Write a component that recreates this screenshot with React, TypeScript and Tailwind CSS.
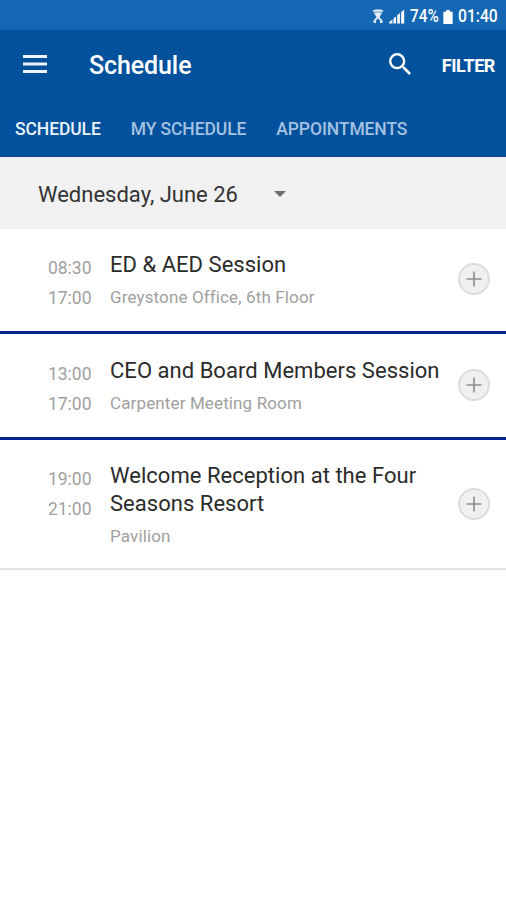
import clsx from "clsx";

type Session = {
  start: string;
  end: string;
  title: string;
  place: string;
  rowClass: string;
};

const tabs = [
  { label: "SCHEDULE", active: true },
  { label: "MY SCHEDULE", active: false },
  { label: "APPOINTMENTS", active: false },
];

const sessions: Session[] = [
  {
    start: "08:30",
    end: "17:00",
    title: "ED & AED Session",
    place: "Greystone Office, 6th Floor",
    rowClass: "h-[105px] pb-[2px] border-b-[3px] border-[#04218c]",
  },
  {
    start: "13:00",
    end: "17:00",
    title: "CEO and Board Members Session",
    place: "Carpenter Meeting Room",
    rowClass: "h-[106px] pt-px pb-[3px] border-b-[3px] border-[#04218c]",
  },
  {
    start: "19:00",
    end: "21:00",
    title: "Welcome Reception at the Four Seasons Resort",
    place: "Pavilion",
    rowClass: "h-[130px] border-b-2 border-[#e4e4e4]",
  },
];

const StatusBar = () => (
  <div className="h-[30px] bg-[#1467b3] flex items-center justify-end pr-[7px] pt-[3px] text-white">
    <svg width="12" height="15" viewBox="0 0 12 15" fill="currentColor">
      <path d="M0.5 1.500Q6-1 11.500 1.500L10 3.500Q6 2 2 3.500Z" opacity="0.8" />
      <path d="M2 4Q6 2.600 10 4L7.500 8H4.500Z" opacity="0.9" />
      <path d="M4.500 8h3l3 3.500V14H8v-2.500L6 9.500l-2 2V14H1.500v-2.500z" opacity="0.85" />
    </svg>
    <svg className="ml-[5px]" width="17" height="15" viewBox="0 0 17 15" fill="currentColor">
      <path d="M0 14.500v-1.500l3.500-2.500v4z" opacity="0.9" />
      <path d="M4.500 14.500V9.500l2.500-2v7zM8.200 14.500V6.300l2.700-2.200v10.400zM12.100 14.500V3.300L15.200 .5v14z" />
    </svg>
    <span className="ml-[4px] -mt-px text-[18px] leading-5 w-[30px]">
      <span className="inline-block origin-left scale-x-[0.85] font-medium whitespace-nowrap">74%</span>
    </span>
    <svg className="ml-[3px]" width="10" height="14" viewBox="0 0 10 15" fill="currentColor">
      <path d="M3 0h4v2h3v13H0V2h3z" />
    </svg>
    <span className="ml-[5px] -mt-px text-[18px] leading-5 w-[41px]">
      <span className="inline-block origin-left scale-x-[0.87] font-medium whitespace-nowrap">01:40</span>
    </span>
  </div>
);

const Header = () => (
  <header className="h-[127px] bg-[#02519c] text-white border-b border-[#1b3f92]">
    <div className="h-[70px] flex items-center pl-[23px] pr-[11px]">
      <svg className="-mt-[2px]" width="24" height="18" viewBox="0 0 24 18" fill="currentColor">
        <path d="M0 0h24v3H0zM0 7.500h24v3H0zM0 15h24v3H0z" opacity="0.93" />
      </svg>
      <h1 className="ml-[42px] mt-[2px] text-[25px] font-medium leading-[30px] tracking-[-0.1px]">Schedule</h1>
      <svg className="ml-auto -mt-[2px]" width="22" height="22" viewBox="3 3 17.500 17.500" fill="currentColor">
        <path d="M15.500 14h-.79l-.28-.27A6.471 6.471 0 0 0 16 9.500 6.500 6.500 0 1 0 9.500 16c1.610 0 3.090-.59 4.230-1.570l.27.28v.79l5 4.990L20.490 19l-4.990-5zm-6 0C7.010 14 5 11.990 5 9.500S7.010 5 9.500 5 14 7.010 14 9.500 11.990 14 9.500 14z" />
      </svg>
      <button className="ml-[31px] text-[18px] font-bold tracking-[-0.4px]">FILTER</button>
    </div>
    <nav className="flex gap-[30px] pl-[15px] pt-[15px] text-[17.5px] leading-7 font-medium tracking-[-0.1px] whitespace-nowrap">
      {tabs.map((tab) => (
        <span key={tab.label} className={clsx(tab.active ? "text-[#e9f1fb]" : "text-[#a4c2e2]")}>
          {tab.label}
        </span>
      ))}
    </nav>
  </header>
);

const SessionRow = ({ session }: { session: Session }) => (
  <li className={clsx("flex items-start pr-4", session.rowClass)}>
    <div className="w-[91.5px] pt-[24px] text-right text-[17.5px] leading-[30px] text-[#a0a0a0]">
      <div>{session.start}</div>
      <div>{session.end}</div>
    </div>
    <div className="ml-[18.5px] w-[336px] pt-[22px]">
      <h2 className="text-[22px] leading-7 tracking-[0.03px] text-[#2b2b2b]">{session.title}</h2>
      <p className="mt-[5px] text-[17px] leading-[26px] tracking-[0.13px] text-[#a0a0a0]">{session.place}</p>
    </div>
    <button className="ml-auto self-center shrink-0 size-8 rounded-full border-2 border-[#dcdcdc] bg-[#f0f0f0] flex items-center justify-center">
      <svg width="16" height="16" viewBox="0 0 16 16" stroke="#8c8c8c" strokeWidth="1.6">
        <path d="M8 .5v15M.5 8h15" />
      </svg>
    </button>
  </li>
);

export default function App() {
  return (
    <div className="w-full min-h-screen bg-white font-[Roboto,sans-serif]">
      <StatusBar />
      <Header />
      <div className="h-[72px] bg-[#f1f1f1] flex items-center pl-[38px]">
        <span className="mt-[3px] text-[22px] leading-7 text-[#333333] whitespace-nowrap">Wednesday, June 26</span>
        <svg className="ml-[36px] mt-[2px]" width="12" height="6" viewBox="0 0 12 6" fill="#6c6c6c">
          <path d="M0 0h12L6 6z" />
        </svg>
      </div>
      <ul>
        {sessions.map((session) => (
          <SessionRow key={session.title} session={session} />
        ))}
      </ul>
    </div>
  );
}
